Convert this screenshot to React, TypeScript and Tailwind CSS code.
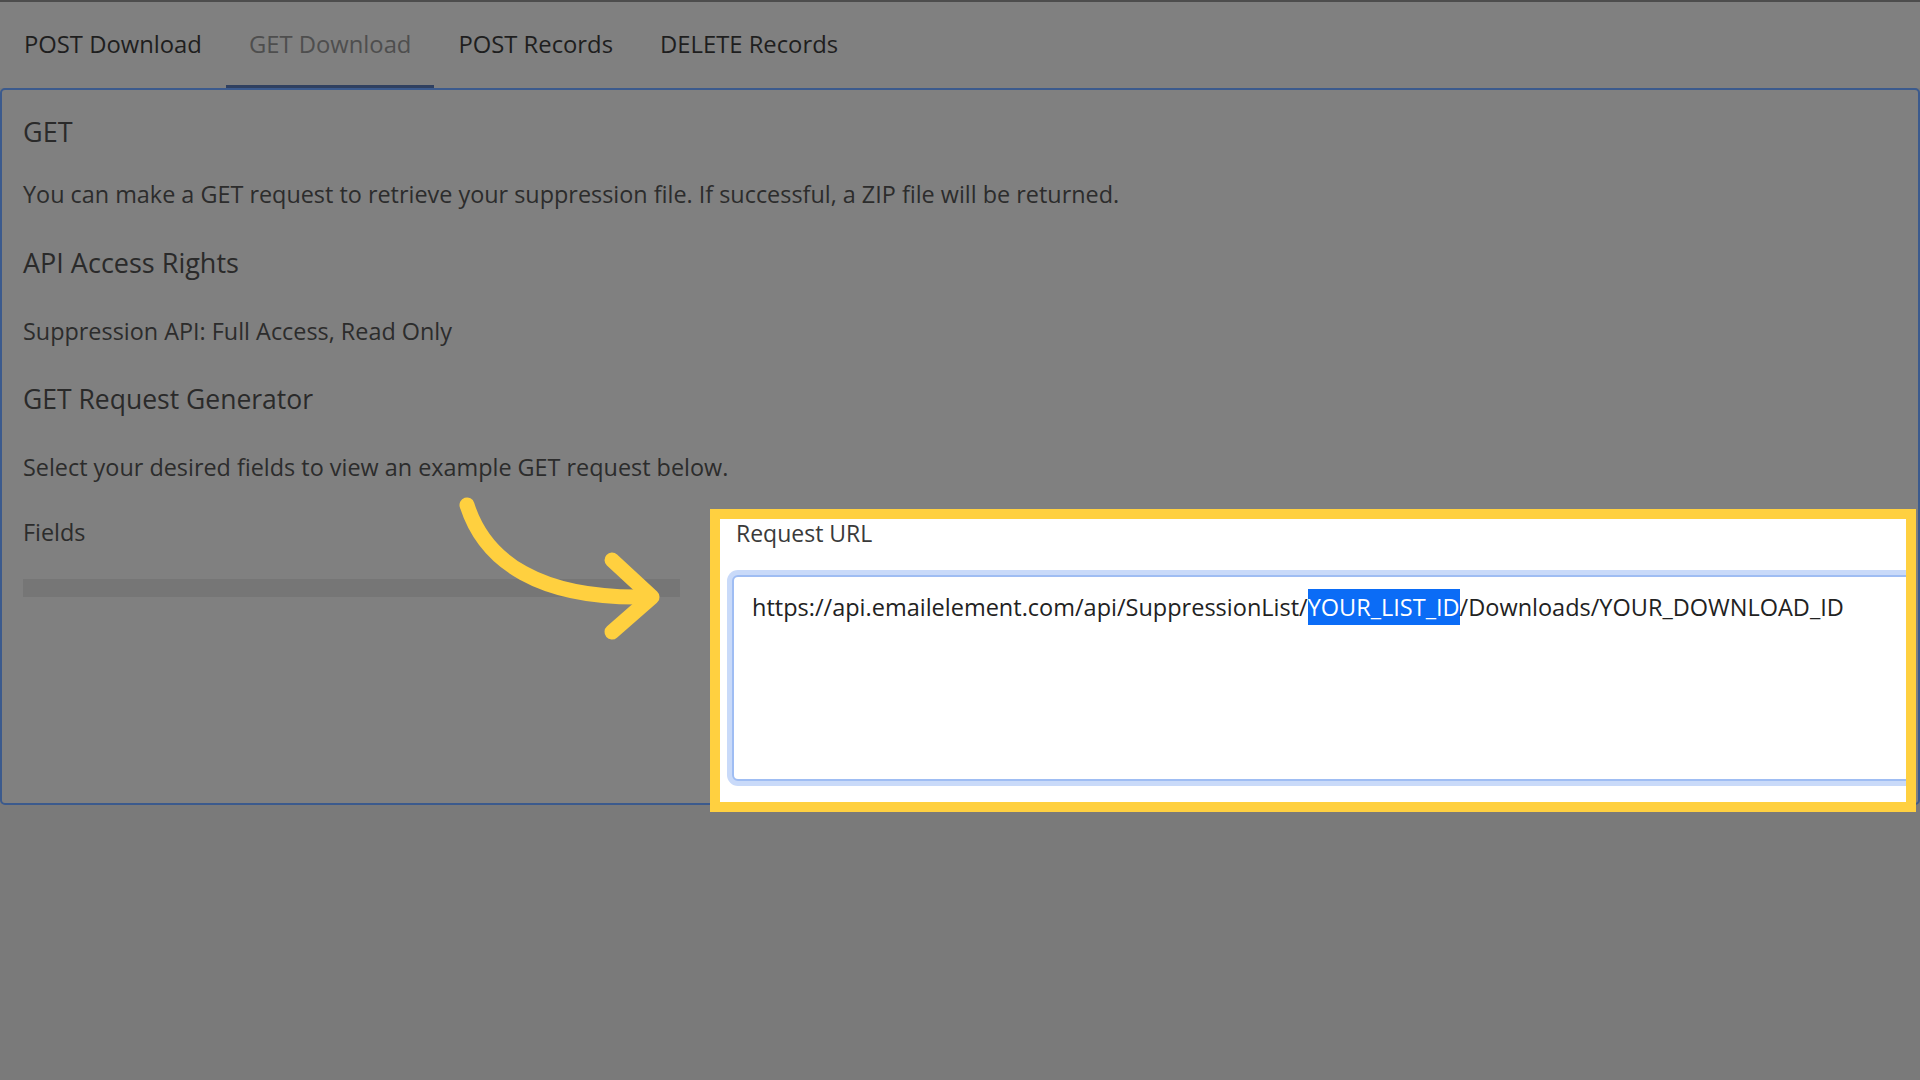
import React from 'react'

const tabs = [
  { label: 'POST Download', active: false },
  { label: 'GET Download', active: true },
  { label: 'POST Records', active: false },
  { label: 'DELETE Records', active: false },
]

function CurvedArrow() {
  return (
    <svg
      className="absolute left-[440px] top-[480px]"
      width="260"
      height="180"
      viewBox="0 0 260 180"
      fill="none"
    >
      <path
        d="M27 25 C45 82 100 119 205 117"
        stroke="#ffd03f"
        strokeWidth="15"
        strokeLinecap="round"
      />
      <path
        d="M172 80 L212 117 L172 152"
        stroke="#ffd03f"
        strokeWidth="15"
        strokeLinecap="round"
        strokeLinejoin="round"
      />
    </svg>
  )
}

export default function App() {
  return (
    <div
      className="relative w-[1920px] h-[1080px] overflow-hidden bg-[#7a7a7a] text-[#2c2c2c]"
      style={{ fontFamily: '"Open Sans", "Noto Sans", sans-serif' }}
    >
      {/* Tabs */}
      <div className="bg-[#808080] border-t-2 border-[#4d4d4d]">
        <div className="flex gap-[1px] pl-[1px] h-[86px] items-stretch">
          {tabs.map(tab => (
            <div
              key={tab.label}
              className={
                tab.active
                  ? 'flex items-center px-[23px] pt-[3px] text-[23.8px] text-[#4e4e4e] border-b-[3px] border-[#2f4060]'
                  : 'flex items-center px-[23px] pt-[3px] text-[23.8px] text-[#1e1e1e] border-b-[3px] border-transparent'
              }
            >
              {tab.label}
            </div>
          ))}
        </div>
      </div>

      {/* Panel */}
      <div className="bg-[#808080] border-2 border-[#3b5a8d] rounded-[5px] pl-[21px] pb-[206px]">
        <h2 className="mt-[25px] text-[27px] leading-[34px] text-[#2a2a2a]">GET</h2>
        <p className="mt-[30px] text-[23.4px] leading-[30px]">
          You can make a GET request to retrieve your suppression file. If successful, a ZIP file will be returned.
        </p>
        <h2 className="mt-[37px] text-[27px] leading-[34px] text-[#2a2a2a]">API Access Rights</h2>
        <p className="mt-[36px] text-[23.4px] leading-[30px]">Suppression API: Full Access, Read Only</p>
        <h2 className="mt-[36px] text-[26.5px] leading-[34px] text-[#2a2a2a]">GET Request Generator</h2>
        <p className="mt-[36px] text-[23.4px] leading-[30px]">
          Select your desired fields to view an example GET request below.
        </p>
        <div className="mt-[35px] text-[23.4px] leading-[30px]">Fields</div>
        <div className="mt-[32px] w-[657px] h-[18px] bg-[#767676]" />
      </div>

      <CurvedArrow />

      {/* Highlighted request URL */}
      <div className="absolute left-[710px] top-[509px] w-[1206px] h-[303px] border-[10px] border-[#ffd040] bg-white overflow-hidden">
        <div className="pl-[16px] text-[23px] leading-[28px] text-[#3a3a3a]">Request URL</div>
        <div className="ml-[12px] mt-[28px] w-[1300px] h-[206px] rounded-[6px] border-2 border-[#9fbdf3] shadow-[0_0_0_5px_#c9daf9] bg-white pl-[18px] pt-[12px]">
          <div className="text-[23.5px] leading-[36px] text-[#222] whitespace-nowrap">
            https://api.emailelement.com/api/SuppressionList/
            <span className="bg-[#0b6cf6] text-white py-[2px]">YOUR_LIST_ID</span>
            /Downloads/YOUR_DOWNLOAD_ID
          </div>
        </div>
      </div>
    </div>
  )
}
